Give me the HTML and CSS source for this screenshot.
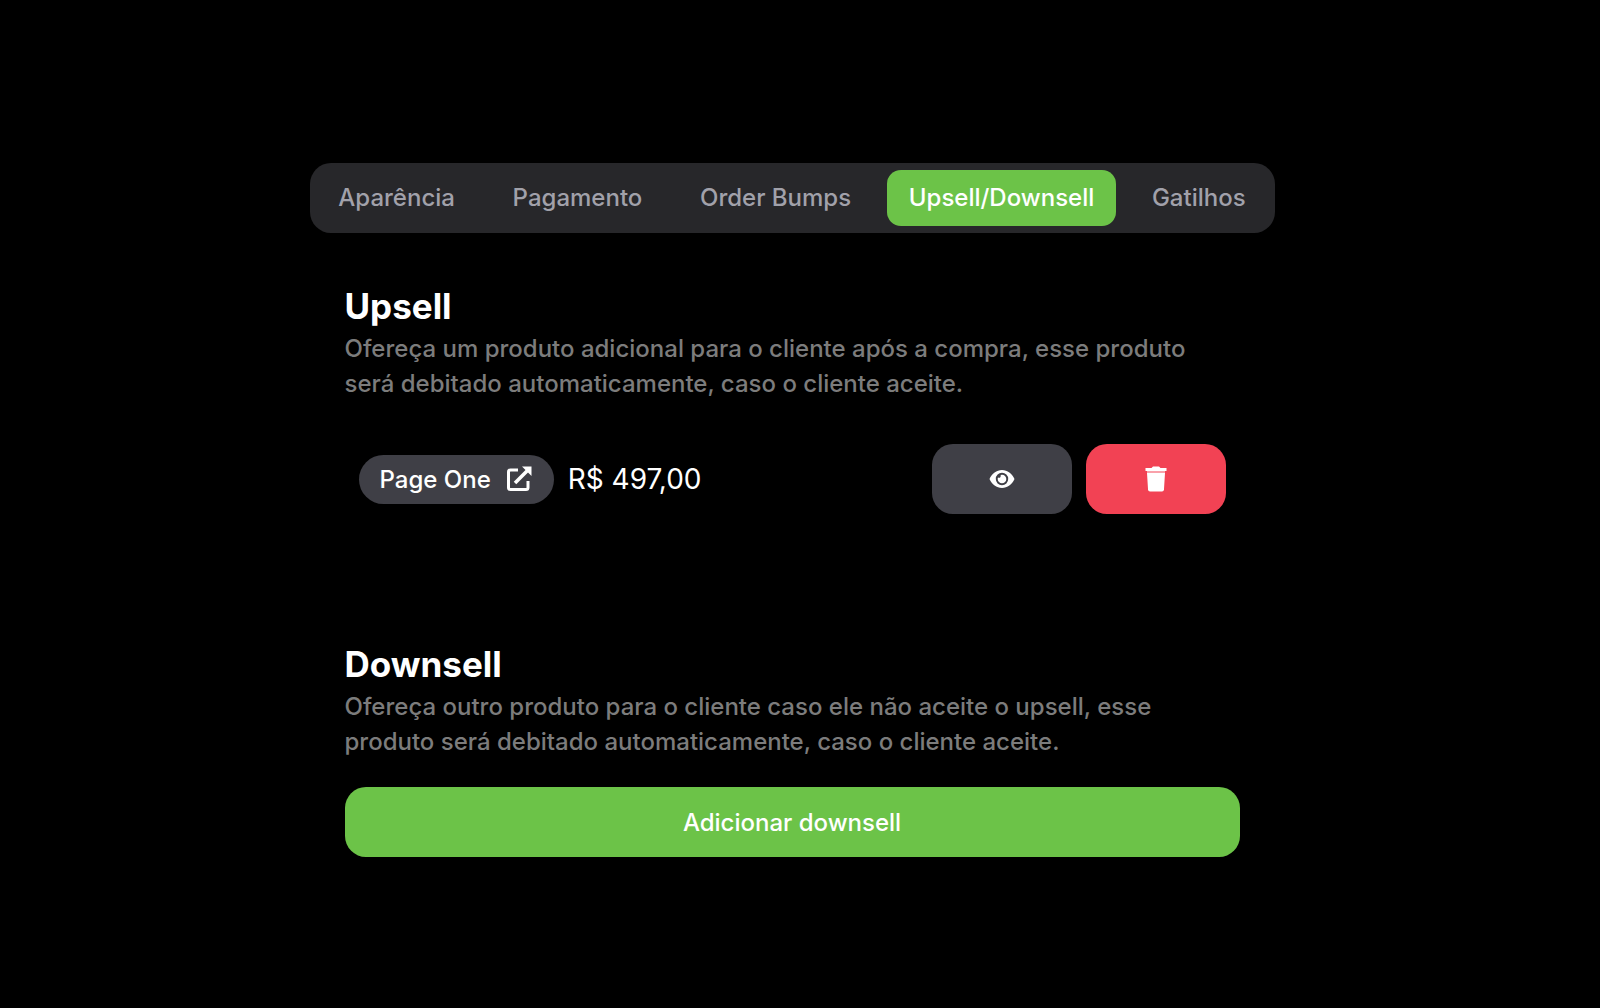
FILE: index.html
```html
<!DOCTYPE html>
<html lang="pt-BR">
<head>
<meta charset="utf-8">
<meta name="viewport" content="width=device-width, initial-scale=1">
<title>Upsell/Downsell</title>
<link rel="stylesheet" href="styles.css">
</head>
<body>
<main class="panel">
  <div class="tabs" role="tablist">
    <button class="tab" type="button" role="tab">Aparência</button>
    <button class="tab" type="button" role="tab">Pagamento</button>
    <button class="tab" type="button" role="tab">Order Bumps</button>
    <button class="tab tab-active" type="button" role="tab" aria-selected="true">Upsell/Downsell</button>
    <button class="tab" type="button" role="tab">Gatilhos</button>
  </div>
  <div class="content">
    <section>
      <h2 class="title">Upsell</h2>
      <p class="description">Ofereça um produto adicional para o cliente após a compra, esse produto será debitado automaticamente, caso o cliente aceite.</p>
      <div class="offer">
        <a class="chip" href="#">Page One
          <svg class="icon" viewBox="0 0 28 28" fill="none" stroke="currentColor" stroke-width="3" aria-hidden="true">
            <path d="M13 5H5.500Q3.500 5 3.500 7V22.500Q3.500 24.500 5.500 24.500H21Q23 24.500 23 22.500V16" stroke-linejoin="round"/>
            <path d="M10 18L23 5" stroke-width="3.500"/>
            <path d="M17 1.500H26.500V11Z" fill="currentColor" stroke="none"/>
          </svg>
        </a>
        <span class="price">R$ 497,00</span>
        <div class="actions">
          <button class="action" type="button" aria-label="Visualizar">
            <svg class="icon" viewBox="0 0 28 28" aria-hidden="true">
              <path fill="currentColor" fill-rule="evenodd" d="M14 5C8.500 5 4 8.500 1.500 14C4 19.500 8.500 23 14 23S24 19.500 26.500 14C24 8.500 19.500 5 14 5ZM14 7.800A6.200 6.200 0 1 1 14 20.200A6.200 6.200 0 0 1 14 7.800Z"/>
              <path fill="currentColor" d="M14 9.700A4.300 4.300 0 1 1 9.700 14A4.300 4.300 0 0 1 10 12.500Q13 13.500 12.700 9.900Q13.300 9.700 14 9.700Z"/>
            </svg>
          </button>
          <button class="action action-danger" type="button" aria-label="Excluir">
            <svg class="icon" viewBox="0 0 28 28" fill="currentColor" aria-hidden="true">
              <path d="M3.500 3H9.500L11 1.500H17L18.500 3H24.500V6H3.500Z"/>
              <path d="M5 8H23L22 24.500Q21.800 26.500 20 26.500H8Q6.200 26.500 6 24.500Z"/>
              <path d="M5 6H23V8H5Z" opacity=".5"/>
            </svg>
          </button>
        </div>
      </div>
    </section>
    <section>
      <h2 class="title">Downsell</h2>
      <p class="description">Ofereça outro produto para o cliente caso ele não aceite o upsell, esse produto será debitado automaticamente, caso o cliente aceite.</p>
      <button class="add" type="button">Adicionar downsell</button>
    </section>
  </div>
</main>
</body>
</html>
```
FILE: styles.css
```css
* { box-sizing: border-box; }
body {
  margin: 0;
  padding: 163px 16px 80px 0;
  background: #000;
  color: #fff;
  font: 500 24px/35px Inter, "Liberation Sans", sans-serif;
}
button { border: 0; font: inherit; color: inherit; cursor: pointer; }
svg { display: block; flex: none; }
.panel { max-width: 965px; margin: 0 auto; }
.tabs {
  display: flex;
  gap: 14px;
  padding: 7px;
  border-radius: 21px;
  background: #27272a;
}
.tab {
  flex: 1 1 auto;
  padding: 10px 20px 11px;
  border-radius: 14px;
  background: none;
  color: #a1a1aa;
  white-space: nowrap;
}
.tab-active { background: #6cc348; color: #fff; }
.content {
  display: flex;
  flex-direction: column;
  gap: 84px;
  padding: 49px 35px 0;
}
.title { margin: 0; font-size: 35px; line-height: 49px; font-weight: 700; }
.description { margin: 0; color: #7c7c7c; }
.offer {
  display: flex;
  align-items: center;
  gap: 14px;
  padding: 43px 14px 42px;
}
.chip {
  display: flex;
  align-items: center;
  gap: 14px;
  height: 49px;
  padding: 0 21px;
  border-radius: 25px;
  background: #3f3f46;
  color: #fff;
  text-decoration: none;
}
.icon { width: 28px; height: 28px; }
.price { font-size: 28px; font-weight: 400; }
.actions { display: flex; gap: 14px; margin-left: auto; }
.action {
  display: flex;
  align-items: center;
  justify-content: center;
  width: 140px;
  height: 70px;
  border-radius: 21px;
  background: #3f3f46;
}
.action-danger { background: #f24254; }
.add {
  width: 100%;
  height: 70px;
  margin-top: 28px;
  border-radius: 21px;
  background: #6cc348;
}
```
